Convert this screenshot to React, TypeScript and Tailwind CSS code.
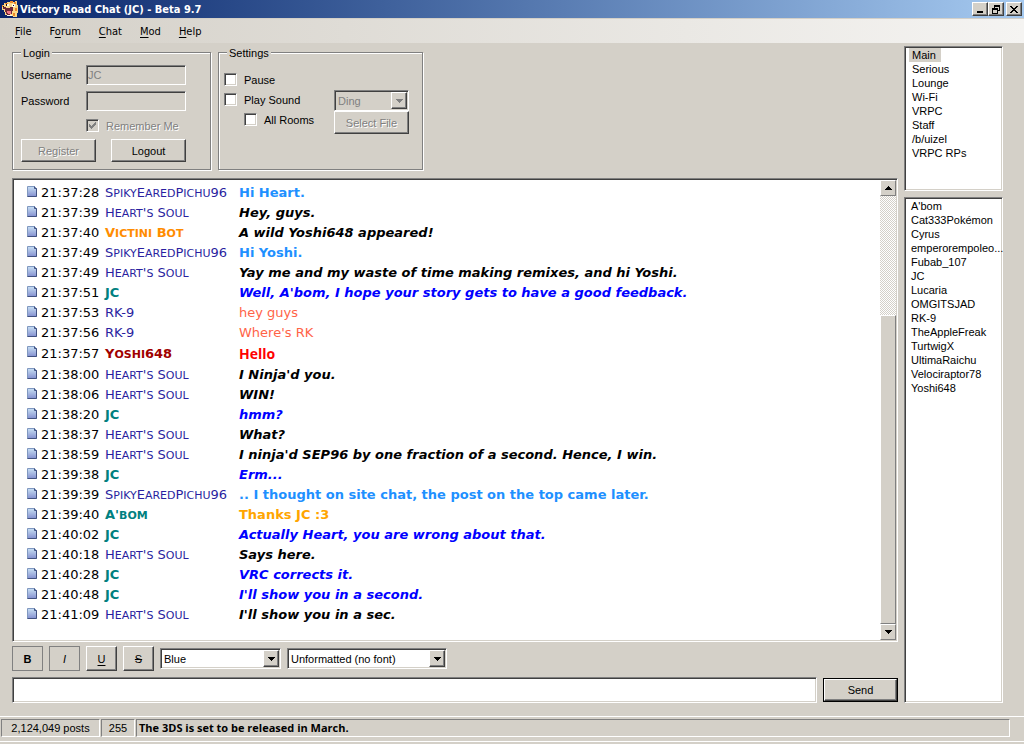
import { useState, type ReactNode } from "react";

const sunken =
  "border border-t-[#808080] border-l-[#808080] border-b-white border-r-white shadow-[inset_1px_1px_0_#404040,inset_-1px_-1px_0_#d4d0c8]";
const raised =
  "border border-t-white border-l-white border-b-[#404040] border-r-[#404040] bg-[#d4d0c8] shadow-[inset_-1px_-1px_0_#808080]";
const etched =
  "border border-[#808080] shadow-[1px_1px_0_#fff,inset_1px_1px_0_#fff]";
const embossed = "text-[#808080] [text-shadow:1px_1px_0_#fff]";
const scrollPart =
  "border border-t-white border-l-white border-b-[#808080] border-r-[#808080] bg-[#d4d0c8]";

const menus = ["File", "Forum", "Chat", "Mod", "Help"];
const menuKeys = [0, 1, 0, 0, 0];

const rooms = ["Main", "Serious", "Lounge", "Wi-Fi", "VRPC", "Staff", "/b/uizel", "VRPC RPs"];

const users = [
  "A'bom",
  "Cat333Pokémon",
  "Cyrus",
  "emperorempoleo...",
  "Fubab_107",
  "JC",
  "Lucaria",
  "OMGITSJAD",
  "RK-9",
  "TheAppleFreak",
  "TurtwigX",
  "UltimaRaichu",
  "Velociraptor78",
  "Yoshi648",
];

// name and message styling for each person in the log
const styles: Record<string, { name: string; text: string }> = {
  SpikyEaredPichu96: { name: "text-[#2a1fa0]", text: "font-bold text-[#1e90ff]" },
  "Heart's Soul": { name: "text-[#2a1fa0]", text: "font-bold italic text-black" },
  "Victini Bot": { name: "font-bold text-[#ff8c00]", text: "font-bold italic text-black" },
  JC: { name: "font-bold text-[#008080]", text: "font-bold italic text-[#0000ff]" },
  "RK-9": { name: "text-[#2a1fa0]", text: "text-[#ff6347]" },
  Yoshi648: {
    name: "font-bold text-[#a00000]",
    text: "font-['Open_Sans',sans-serif] text-[14px] font-bold text-[#ff0000]",
  },
  "A'bom": { name: "font-bold text-[#008080]", text: "font-bold text-[#ffa500]" },
};

const log: [string, string, string][] = [
  ["21:37:28", "SpikyEaredPichu96", "Hi Heart."],
  ["21:37:39", "Heart's Soul", "Hey, guys."],
  ["21:37:40", "Victini Bot", "A wild Yoshi648 appeared!"],
  ["21:37:49", "SpikyEaredPichu96", "Hi Yoshi."],
  ["21:37:49", "Heart's Soul", "Yay me and my waste of time making remixes, and hi Yoshi."],
  ["21:37:51", "JC", "Well, A'bom, I hope your story gets to have a good feedback."],
  ["21:37:53", "RK-9", "hey guys"],
  ["21:37:56", "RK-9", "Where's RK"],
  ["21:37:57", "Yoshi648", "Hello"],
  ["21:38:00", "Heart's Soul", "I Ninja'd you."],
  ["21:38:06", "Heart's Soul", "WIN!"],
  ["21:38:20", "JC", "hmm?"],
  ["21:38:37", "Heart's Soul", "What?"],
  ["21:38:59", "Heart's Soul", "I ninja'd SEP96 by one fraction of a second. Hence, I win."],
  ["21:39:38", "JC", "Erm..."],
  ["21:39:39", "SpikyEaredPichu96", ".. I thought on site chat, the post on the top came later."],
  ["21:39:40", "A'bom", "Thanks JC :3"],
  ["21:40:02", "JC", "Actually Heart, you are wrong about that."],
  ["21:40:18", "Heart's Soul", "Says here."],
  ["21:40:28", "JC", "VRC corrects it."],
  ["21:40:48", "JC", "I'll show you in a second."],
  ["21:41:09", "Heart's Soul", "I'll show you in a sec."],
];

function AppIcon() {
  return (
    <svg width="16" height="16" viewBox="0 0 16 16" shapeRendering="crispEdges" aria-hidden>
      <path d="M2 2h3V1h4V0h2v1h2V0h2v4h1v8h-1v4h-4v-1H5v-1H3v-3H2V9H0V4h2z" fill="#fcd888" />
      <path d="M8 0h3v2H8zM12 1h2v2h-2zM3 2h3v1H3zM13 7h2v3h-2zM11 12h2v3h-2zM0 4h1v2H0z" fill="#f08828" />
      <path d="M5 3h2v2H5zM10 3h3v3h-3zM5 14h5v1H5z" fill="#fffcec" />
      <path d="M1 6h3v1h4V6h3v4h-1v3H8v1H5v-1H4v-2H3V8H1z" fill="#702838" />
      <path d="M5 10h4v3H6v-1H5z" fill="#f07888" />
      <path d="M4 3h1v2H4zM11 4h1v1h-1zM1 5h1v1H1z" fill="#201010" />
    </svg>
  );
}

function PageIcon() {
  return (
    <svg className="mt-[3px] self-start" width="11" height="12" viewBox="0 0 11 12" aria-hidden>
      <defs>
        <linearGradient id="page" x1="0" y1="0" x2="0" y2="1">
          <stop offset="0" stopColor="#c8e0f4" />
          <stop offset="1" stopColor="#8490d0" />
        </linearGradient>
      </defs>
      <path d="M0.5 0.5h7l2 2v8h-9z" fill="url(#page)" stroke="#8098c0" />
      <path d="M7.5 0.5v2h2v8h-9" fill="none" stroke="#405080" />
    </svg>
  );
}

function Arrow({ up = false }: { up?: boolean }) {
  return (
    <svg width="7" height="4" viewBox="0 0 7 4" shapeRendering="crispEdges" fill="currentColor" aria-hidden>
      <path d={up ? "M3 0h1v1h1v1h1v1h1v1H0V3h1V2h1V1h1z" : "M0 0h7v1H6v1H5v1H4v1H3V3H2V2H1V1H0z"} />
    </svg>
  );
}

// capitals at full size, lower case as capitals slightly smaller
function SmallCaps({ name }: { name: string }) {
  return (
    <>
      {name.split(/([a-z]+)/).map((part, i) =>
        i % 2 ? (
          <span key={i} className="text-[11px] uppercase">
            {part}
          </span>
        ) : (
          part
        ),
      )}
    </>
  );
}

function Combo({ label, value, className, disabled = false }: { label: string; value: string; className: string; disabled?: boolean }) {
  return (
    <div className={`relative ${className}`}>
      <select
        aria-label={label}
        disabled={disabled}
        className={`block h-[21px] w-full appearance-none pl-[3px] pr-5 opacity-100 outline-none ${sunken} ${
          disabled ? "bg-[#d4d0c8] text-[#808080]" : "bg-white text-black"
        }`}
      >
        <option>{value}</option>
      </select>
      <span
        className={`pointer-events-none absolute top-[2px] right-[2px] flex h-[17px] w-4 items-center justify-center ${raised} ${
          disabled ? "text-[#808080]" : "text-black"
        }`}
      >
        <Arrow />
      </span>
    </div>
  );
}

function Check({ id, children, checked = false, disabled = false }: { id: string; children: ReactNode; checked?: boolean; disabled?: boolean }) {
  const [on, setOn] = useState(checked);
  return (
    <div className="flex items-center gap-[7px]">
      <span className="grid">
        <input
          id={id}
          type="checkbox"
          checked={on}
          disabled={disabled}
          onChange={(e) => setOn(e.target.checked)}
          className={`col-start-1 row-start-1 size-[13px] appearance-none ${sunken} ${disabled ? "bg-[#d4d0c8]" : "bg-white"}`}
        />
        {on && (
          <svg
            className="pointer-events-none col-start-1 row-start-1"
            width="13"
            height="13"
            viewBox="0 0 13 13"
            shapeRendering="crispEdges"
            aria-hidden
          >
            <path d="M3 5h1v1h1v1h1V6h1V5h1V4h1V3h1v3H9v1H8v1H7v1H6v1H5V9H4V8H3z" fill="#808080" />
          </svg>
        )}
      </span>
      <label htmlFor={id} className={`pt-[2px] ${disabled ? embossed : ""}`}>
        {children}
      </label>
    </div>
  );
}

function Button({ children, disabled = false }: { children: ReactNode; disabled?: boolean }) {
  return (
    <button disabled={disabled} className={`h-[23px] w-[75px] ${raised} ${disabled ? embossed : ""}`}>
      {children}
    </button>
  );
}

function CaptionButton({ label, d }: { label: string; d: string }) {
  return (
    <button aria-label={label} className={`flex h-[14px] w-4 items-center justify-center ${raised}`}>
      <svg width="10" height="9" viewBox="0 0 10 9" shapeRendering="crispEdges" aria-hidden>
        <path d={d} fill="#000" fillRule="evenodd" />
      </svg>
    </button>
  );
}

export default function App() {
  const [room, setRoom] = useState("Main");

  return (
    <div className="flex min-h-screen flex-col bg-[#d4d0c8] font-['Liberation_Sans',Arial,sans-serif] text-[11px] leading-[14px] text-black">
      {/* Title bar */}
      <header className="flex h-[18px] items-center bg-gradient-to-r from-[#0a246a] to-[#a6caf0] pr-[2px] pl-[2px]">
        <AppIcon />
        <h1 className="flex-1 pt-[2px] pl-[2px] font-['DejaVu_Sans_Condensed','DejaVu_Sans',sans-serif] text-[11px] font-bold text-white">
          Victory Road Chat (JC) - Beta 9.7
        </h1>
        <div className="flex">
          <CaptionButton label="Minimize" d="M2 6h6v2H2z" />
          <CaptionButton label="Restore" d="M3 0h6v6H7V5h1V2H4v1H3zM1 3h6v6H1zM2 5v3h4V5z" />
          <span className="w-[2px]" />
          <CaptionButton
            label="Close"
            d="M1 1h2v1h1v1h2V2h1V1h2v1H8v1H7v1H6v1h1v1h1v1h1v1H7V7H6V6H4v1H3v1H1V7h1V6h1V5h1V4H3V3H2V2H1z"
          />
        </div>
      </header>

      {/* Menu */}
      <nav className="flex h-[25px] items-center border-t border-[#d4d0c8] bg-gradient-to-r from-[#d4d0c8] to-[#f5f4f2] pt-px pl-[15px] font-['DejaVu_Sans_Condensed','DejaVu_Sans',sans-serif]">
        <div className="flex gap-[18px]">
          {menus.map((m, i) => (
            <button key={m}>
              {m.slice(0, menuKeys[i])}
              <span className="underline underline-offset-2">{m[menuKeys[i]]}</span>
              {m.slice(menuKeys[i] + 1)}
            </button>
          ))}
        </div>
      </nav>

      <main className="flex flex-1 gap-[6px] pt-[3px] pr-[21px] pb-[13px] pl-3">
        <div className="flex min-w-0 flex-1 flex-col">
          <div className="flex items-start gap-[7px] pt-px">
            <fieldset className={`h-[123px] w-[199px] pl-2 ${etched}`}>
              <legend className="h-[10px] bg-[#d4d0c8] px-[2px] leading-3">Login</legend>
              <div className="flex flex-col gap-[6px] pt-2">
                <div className="flex items-center">
                  <label htmlFor="username" className="w-[65px]">Username</label>
                  <input id="username" disabled defaultValue="JC" className={`h-5 w-[100px] bg-[#d4d0c8] px-px text-[#808080] ${sunken}`} />
                </div>
                <div className="flex items-center">
                  <label htmlFor="password" className="w-[65px]">Password</label>
                  <input id="password" type="password" disabled className={`h-5 w-[100px] bg-[#d4d0c8] px-px ${sunken}`} />
                </div>
                <div className="pl-[65px]">
                  <Check id="remember" checked disabled>Remember Me</Check>
                </div>
                <div className="flex gap-[15px]">
                  <Button disabled>Register</Button>
                  <Button>Logout</Button>
                </div>
              </div>
            </fieldset>

            <fieldset className={`h-[123px] w-[205px] pl-[5px] ${etched}`}>
              <legend className="ml-[3px] h-[10px] bg-[#d4d0c8] px-[2px] leading-3">Settings</legend>
              <div className="flex pt-[14px]">
                <div className="flex w-[110px] flex-col gap-1">
                  <Check id="pause">Pause</Check>
                  <Check id="sound">Play Sound</Check>
                  <div className="pl-5">
                    <Check id="all-rooms">All Rooms</Check>
                  </div>
                </div>
                <div className="pt-[19px]">
                  <Combo label="Sound" value="Ding" className="w-[75px]" disabled />
                  <Button disabled>Select File</Button>
                </div>
              </div>
            </fieldset>
          </div>

          {/* Chat log */}
          <div className={`mt-[8px] flex flex-1 bg-white p-px ${sunken}`}>
            <ol className="min-w-0 flex-1 pt-[3px] pl-[13px] font-['DejaVu_Sans',Verdana,sans-serif] text-[13px]">
              {log.map(([time, name, text], i) => (
                <li
                  key={i}
                  className={`grid grid-cols-[14px_64px_134px_1fr] items-center whitespace-nowrap ${
                    name === "Yoshi648" ? "h-[22px]" : "h-5"
                  }`}
                >
                  <PageIcon />
                  <time>{time}</time>
                  <span className={styles[name].name}>
                    <SmallCaps name={name} />
                  </span>
                  <span className={styles[name].text}>{text}</span>
                </li>
              ))}
            </ol>
            <div className="flex w-4 flex-col">
              <button aria-label="Scroll up" className={`flex h-4 items-center justify-center ${scrollPart}`}>
                <Arrow up />
              </button>
              <div className="flex-[120] bg-[repeating-conic-gradient(#fff_0_25%,#d4d0c8_0_50%)] bg-[length:2px_2px]" />
              <div className={`flex-[309] ${scrollPart}`} />
              <button aria-label="Scroll down" className={`flex h-4 items-center justify-center ${scrollPart}`}>
                <Arrow />
              </button>
            </div>
          </div>

          {/* Formatting */}
          <div className="mt-1 flex items-center gap-[6px]">
            <button aria-label="Bold" className="h-[25px] w-[31px] border border-[#808080] font-bold">B</button>
            <button aria-label="Italic" className="h-[25px] w-[31px] border border-[#808080] italic">I</button>
            <button aria-label="Underline" className={`h-[25px] w-[31px] underline underline-offset-2 ${raised}`}>U</button>
            <button aria-label="Strikethrough" className={`h-[25px] w-[31px] line-through ${raised}`}>S</button>
            <Combo label="Color" value="Blue" className="w-[121px]" />
            <Combo label="Font" value="Unformatted (no font)" className="w-[160px]" />
          </div>

          <form className="mt-[6px] flex items-center gap-[6px]" onSubmit={(e) => e.preventDefault()}>
            <input aria-label="Message" className={`h-[26px] min-w-0 flex-1 bg-white px-1 outline-none ${sunken}`} />
            <button className="border border-black">
              <span className={`flex h-[22px] w-[73px] items-center justify-center ${raised}`}>Send</span>
            </button>
          </form>
        </div>

        {/* Rooms and users */}
        <aside className="flex w-[99px] flex-col gap-[6px]">
          <ul className={`h-[145px] bg-white pt-px pl-1 ${sunken}`}>
            {rooms.map((r) => (
              <li key={r} className="flex">
                <button onClick={() => setRoom(r)} className={`pr-[5px] pl-[3px] ${r === room ? "bg-[#d4d0c8]" : ""}`}>
                  {r}
                </button>
              </li>
            ))}
          </ul>
          <ul className={`flex-1 bg-white pt-px pl-[6px] whitespace-nowrap ${sunken}`}>
            {users.map((u) => (
              <li key={u}>{u}</li>
            ))}
          </ul>
        </aside>
      </main>

      {/* Status bar */}
      <footer className="border-t border-white pt-[2px]">
        <div className="flex gap-px pr-[14px] pl-px leading-4">
          <span className="w-[99px] border border-t-[#808080] border-r-white border-b-white border-l-[#808080] text-center">
            2,124,049 posts
          </span>
          <span className="w-[34px] border border-t-[#808080] border-r-white border-b-white border-l-[#808080] text-center">
            255
          </span>
          <span className="flex-1 border border-t-[#808080] border-r-white border-b-white border-l-[#808080] pl-[2px] font-['Open_Sans',sans-serif] font-bold">
            The 3DS is set to be released in March.
          </span>
        </div>
        <div className="mt-1 h-[3px] border-t border-white" />
      </footer>
    </div>
  );
}
